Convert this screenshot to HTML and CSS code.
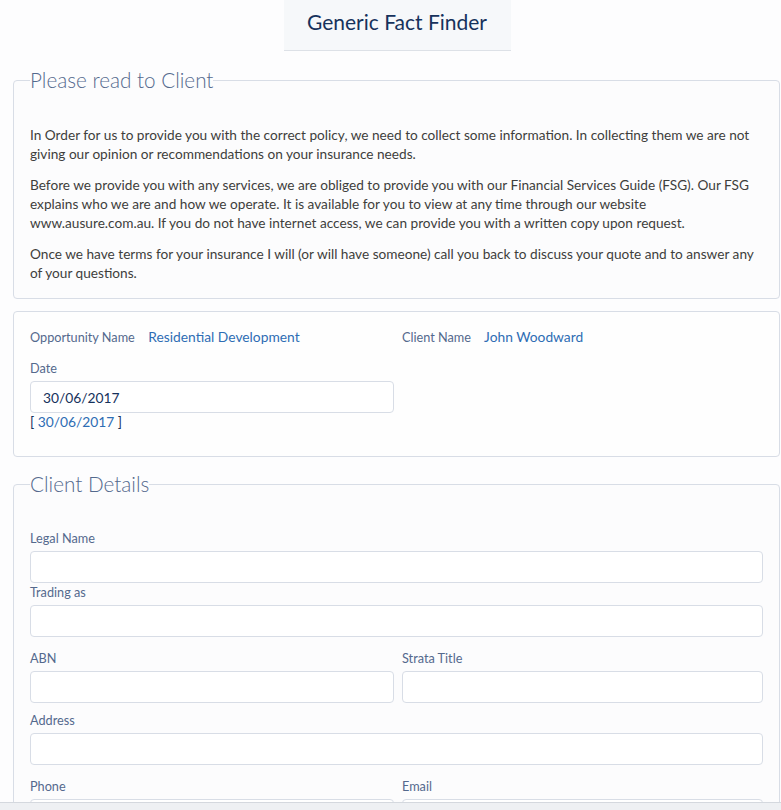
FILE: index.html
```html
<!DOCTYPE html>
<html lang="en">
<head>
    <meta charset="UTF-8">
    <meta name="viewport" content="width=device-width, initial-scale=1.0">
    <title>Generic Fact Finder</title>
    <link rel="stylesheet" href="styles.css">
</head>
<body>
    <!-- Page title tab -->
    <div class="title-bar">
        <h1 class="title">Generic Fact Finder</h1>
    </div>

    <div class="page">
        <!-- Intro statement -->
        <fieldset class="section">
            <legend class="section-legend">Please read to Client</legend>
            <p>In Order for us to provide you with the correct policy, we need to collect some information. In collecting them we are not giving our opinion or recommendations on your insurance needs.</p>
            <p>Before we provide you with any services, we are obliged to provide you with our Financial Services Guide (FSG). Our FSG explains who we are and how we operate. It is available for you to view at any time through our website www.ausure.com.au. If you do not have internet access, we can provide you with a written copy upon request.</p>
            <p>Once we have terms for your insurance I will (or will have someone) call you back to discuss your quote and to answer any of your questions.</p>
        </fieldset>

        <!-- Opportunity summary -->
        <div class="box">
            <div class="two-col">
                <div class="info">
                    <span class="info-label">Opportunity Name</span>
                    <a class="info-value" href="#">Residential Development</a>
                </div>
                <div class="info">
                    <span class="info-label">Client Name</span>
                    <a class="info-value" href="#">John Woodward</a>
                </div>
            </div>
            <div class="two-col date-row">
                <div>
                    <label class="field-label" for="date">Date</label>
                    <input class="input" id="date" type="text" value="30/06/2017">
                    <div class="date-link">[ <a href="#">30/06/2017</a> ]</div>
                </div>
            </div>
        </div>

        <!-- Client details form -->
        <fieldset class="section client">
            <legend class="section-legend">Client Details</legend>

            <label class="field-label" for="legal">Legal Name</label>
            <input class="input" id="legal" type="text">
            <label class="field-label follow" for="trading">Trading as</label>
            <input class="input" id="trading" type="text">

            <div class="two-col row-gap">
                <div>
                    <label class="field-label" for="abn">ABN</label>
                    <input class="input" id="abn" type="text">
                </div>
                <div>
                    <label class="field-label" for="strata">Strata Title</label>
                    <input class="input" id="strata" type="text">
                </div>
            </div>

            <div class="row-gap-sm">
                <label class="field-label" for="address">Address</label>
                <input class="input" id="address" type="text">
            </div>

            <div class="two-col row-gap">
                <div>
                    <label class="field-label" for="phone">Phone</label>
                    <input class="input" id="phone" type="text">
                </div>
                <div>
                    <label class="field-label" for="email">Email</label>
                    <input class="input" id="email" type="text">
                </div>
            </div>
        </fieldset>
    </div>

    <div class="bottom-bar"></div>
</body>
</html>
```

FILE: styles.css
```css
/* Fact finder page */
body {
    margin: 0;
    background-color: #fdfdfe;
    font-family: Lato, "Open Sans", sans-serif;
    color: #333;
}

.title-bar {
    display: flex;
    justify-content: center;
    padding-left: 13px;
}

.title {
    margin: 0;
    width: 227px;
    height: 50px;
    line-height: 44px;
    text-align: center;
    font-size: 21px;
    font-weight: normal;
    color: #16325c;
    background-color: #f6f8fa;
    border-bottom: 1px solid #dde1e7;
}

.page {
    padding: 17px 1px 0 13px;
}

.section {
    margin: 0;
    padding: 34px 16px 15px 16px;
    border: 1px solid #d8dde6;
    border-radius: 4px;
    background-color: #fcfcfd;
}

.section-legend {
    padding: 0;
    margin-left: 0;
    font-size: 20.7px;
    line-height: 24px;
    font-weight: 300;
    color: #54698d;
}

.section p {
    margin: 0 0 12px 0;
    font-size: 13.65px;
    line-height: 19px;
    color: #3e3e3c;
}

.section p:last-child {
    margin-bottom: 0;
}

.box {
    margin-top: 12px;
    margin-bottom: 15px;
    padding: 16px 16px 25px 16px;
    border: 1px solid #d8dde6;
    border-radius: 4px;
    background-color: #fefefe;
}

.two-col {
    display: grid;
    grid-template-columns: 364px 1fr;
    gap: 8px;
}

.info {
    font-size: 13.8px;
    line-height: 18px;
}

.info-label {
    font-size: 12.7px;
    color: #54698d;
    margin-right: 10px;
}

.info-value,
.date-link a {
    color: #2e6db4;
    text-decoration: none;
}

.date-row {
    margin-top: 14px;
}

.field-label {
    display: block;
    font-size: 12.7px;
    line-height: 16px;
    margin-bottom: 5px;
    color: #54698d;
}

.field-label.follow {
    margin-top: 1px;
}

.input {
    display: block;
    box-sizing: border-box;
    width: 100%;
    height: 32px;
    margin: 0;
    padding: 0 12px;
    font-family: inherit;
    font-size: 13.8px;
    color: #16325c;
    background-color: #fff;
    border: 1px solid #d8dde6;
    border-radius: 4px;
}

.date-link {
    font-size: 13.8px;
    line-height: 18px;
    color: #16325c;
}

.client {
    padding-top: 34px;
}

.row-gap {
    margin-top: 13px;
}

.row-gap-sm {
    margin-top: 9px;
}

.bottom-bar {
    position: fixed;
    left: 0;
    right: 0;
    bottom: 0;
    height: 7px;
    background-color: #eef0f3;
    border-top: 1px solid #d4d8de;
}
```
